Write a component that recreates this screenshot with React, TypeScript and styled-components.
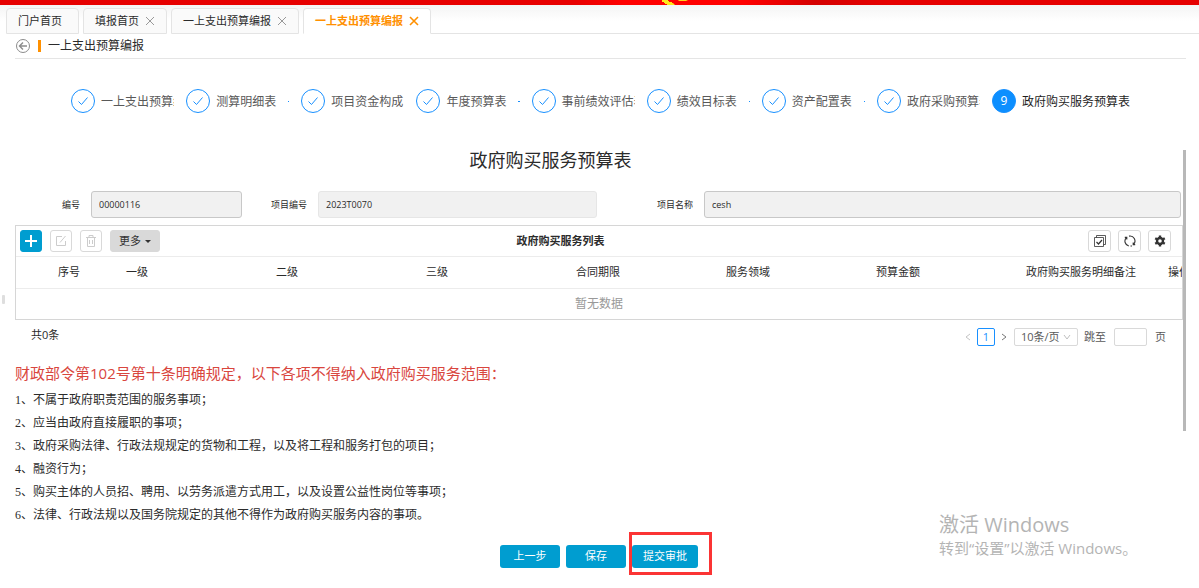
import React from "react";
import styled, { createGlobalStyle, css } from "styled-components";

const GlobalStyle = createGlobalStyle`
  * { box-sizing: border-box; }
  body {
    margin: 0;
    background: #fff;
    color: #2b2b2b;
    font-family: "Open Sans", "Noto Sans CJK SC", sans-serif;
    font-size: 11px;
    line-height: 16px;
  }
  button, input, select { font: inherit; color: inherit; margin: 0; }
`;

const Page = styled.div`
  position: relative;
  overflow: hidden;
  min-height: 100vh;
`;

const Banner = styled.header`
  height: 5px;
  background: linear-gradient(90deg, #e60000 0%, #e80000 48%, #ff0000 52%, #f00 62%, #d40000 68%, #e60000 74%);
  display: flex;
  justify-content: center;
  padding-left: 152px;
`;

const TabStrip = styled.nav`
  display: flex;
  gap: 4px;
  padding: 3px 0 0 6px;
  height: 29px;
  background: linear-gradient(#f4f4f4, #fff 16px);
`;

const Tab = styled.div<{ $active?: boolean }>`
  display: flex;
  align-items: center;
  gap: 6px;
  min-width: 73px;
  padding: 0 11px;
  border: 1px solid #e4e4e4;
  border-radius: 4px 4px 0 0;
  background: #fafafa;
  white-space: nowrap;
  ${(p) =>
    p.$active &&
    css`
      background: #fff;
      border-bottom-color: #fff;
      color: #ff9000;
      font-weight: 700;
    `}
`;

const TabFill = styled.div`
  flex: 1;
  margin-left: -4px;
  border-bottom: 1px solid #e4e4e4;
`;

const TabLink = styled.a`
  color: inherit;
  text-decoration: none;
`;

const PlainButton = styled.button`
  display: flex;
  align-items: center;
  justify-content: center;
  padding: 0;
  border: 0;
  background: none;
  color: #8c8c8c;
`;

const TabClose = styled(PlainButton)<{ $active?: boolean }>`
  color: ${(p) => (p.$active ? "#ff9000" : "#999")};
`;

const Main = styled.main`
  padding: 0 13px 0 15px;
`;

const Crumb = styled.div`
  display: flex;
  align-items: center;
  height: 25px;
  border-bottom: 1px solid #e5e5e5;
  font-size: 12px;
`;

const CrumbMark = styled.span`
  width: 3px;
  height: 12px;
  margin: 0 7px;
  background: #ff9000;
`;

const Steps = styled.ol`
  display: flex;
  gap: 12px;
  list-style: none;
  margin: 30px 56px 33px;
  padding: 0;
`;

const StepItem = styled.li<{ $current?: boolean }>`
  display: flex;
  align-items: center;
  gap: 6px;
  flex: ${(p) => (p.$current ? "none" : "1 1 0")};
  min-width: 0;
  overflow: hidden;
  white-space: nowrap;
  font-size: 12px;
  color: ${(p) => (p.$current ? "#1f1f1f" : "#595959")};
`;

const StepDot = styled.span<{ $current?: boolean }>`
  display: flex;
  align-items: center;
  justify-content: center;
  flex: none;
  width: 24px;
  height: 24px;
  border: 1px solid #1890ff;
  border-radius: 50%;
  background: ${(p) => (p.$current ? "#0d8fff" : "#fff")};
  color: ${(p) => (p.$current ? "#fff" : "#1890ff")};
`;

const StepTitle = styled.span`
  padding-top: 2px;
  line-height: 22px;
`;

const StepTail = styled.span`
  flex: none;
  width: 100px;
  height: 1px;
  margin-left: 6px;
  background: #1890ff;
`;

const ScrollArea = styled.section`
  padding-right: 3px;
  background: linear-gradient(#b8b8b8, #b8b8b8) right 4px / 3px 281px no-repeat;
  background-position: right 4px;
`;

const FormTitle = styled.h1`
  margin: 0;
  padding: 0 97px 2px 0;
  text-align: center;
  font-size: 18px;
  font-weight: 400;
  line-height: 28px;
`;

const FormGrid = styled.form`
  display: grid;
  grid-template-columns: 76fr 151fr 76fr 279fr 107fr 477fr;
  align-items: center;
  padding: 15px 2px 7px 0;
  font-size: 9px;
`;

const FieldLabel = styled.label`
  padding-right: 11px;
  text-align: right;
  white-space: nowrap;
`;

const Field = styled.input<{ $light?: boolean }>`
  width: 100%;
  min-width: 0;
  height: 27px;
  padding: 0 7px;
  border: 1px solid ${(p) => (p.$light ? "#e6e6e6" : "#c8c8c8")};
  border-radius: 3px;
  background: #f1f1f1;
`;

const Panel = styled.div`
  border: 1px solid #d6d6d6;
  overflow: hidden;
`;

const Toolbar = styled.div`
  display: grid;
  grid-template-columns: 1fr auto 1fr;
  align-items: center;
  height: 30px;
  padding: 0 11px 0 4px;
`;

const ToolGroup = styled.div<{ $end?: boolean }>`
  display: flex;
  gap: ${(p) => (p.$end ? "7px" : "8px")};
  justify-content: ${(p) => (p.$end ? "flex-end" : "flex-start")};
`;

const ToolButton = styled.button<{ $kind?: "primary" | "more" | "muted" }>`
  display: flex;
  align-items: center;
  justify-content: center;
  gap: 4px;
  width: ${(p) => (p.$kind === "more" ? "50px" : p.$kind ? "22px" : "23px")};
  height: 22px;
  padding: 0;
  border: 1px solid #d9d9d9;
  border-radius: 3px;
  background: #fff;
  color: #333;
  ${(p) => p.$kind === "primary" && "background: #009dd0; border-color: #009dd0; color: #fff;"}
  ${(p) => p.$kind === "more" && "background: #d9d9d9;"}
  ${(p) => p.$kind === "muted" && "color: #ccc;"}
`;

const PanelTitle = styled.h2`
  margin: 0;
  padding-right: 70px;
  font-size: 11px;
  font-weight: 700;
`;

const Table = styled.table`
  table-layout: fixed;
  width: 1220px;
  border-collapse: collapse;
`;

const HeadCell = styled.th<{ $flush?: boolean }>`
  height: 32px;
  padding: ${(p) => (p.$flush ? "0 0 2px" : "0 8px 2px")};
  border-top: 1px solid #ececec;
  border-bottom: 1px solid #ececec;
  text-align: left;
  font-weight: 400;
  white-space: nowrap;
`;

const Empty = styled.p`
  margin: 0;
  text-align: center;
  font-size: 12px;
  line-height: 30px;
  color: #999;
`;

const Footer = styled.div`
  display: flex;
  align-items: center;
  justify-content: space-between;
  height: 34px;
  padding: 0 17px 0 16px;
`;

const Total = styled.span`
  padding-bottom: 4px;
`;

const Pager = styled.div`
  display: flex;
  align-items: center;
  color: #595959;
`;

const PageNumber = styled.button`
  width: 18px;
  height: 18px;
  margin: 0 5px;
  padding: 0;
  border: 1px solid #1890ff;
  border-radius: 2px;
  background: #fff;
  color: #1890ff;
  line-height: 14px;
`;

const SizeBox = styled.span`
  display: flex;
  align-items: center;
  width: 64px;
  height: 18px;
  margin: 0 6px;
  padding-right: 6px;
  border: 1px solid #d9d9d9;
  border-radius: 2px;
  color: #bfbfbf;
`;

const SizeSelect = styled.select`
  appearance: none;
  flex: 1;
  min-width: 0;
  height: 16px;
  padding: 0 0 0 6px;
  border: 0;
  background: none;
  color: #595959;
  line-height: 16px;
`;

const JumpLabel = styled.label`
  display: flex;
  align-items: center;
  gap: 8px;
`;

const JumpInput = styled.input`
  width: 33px;
  height: 18px;
  border: 1px solid #d9d9d9;
  border-radius: 2px;
`;

const NoticeTitle = styled.h3`
  margin: 0;
  padding: 7px 0 4px;
  font-size: 15px;
  font-weight: 400;
  line-height: 24px;
  color: #d9463e;
`;

const NoticeLine = styled.p`
  margin: 0;
  font-family: "Liberation Serif", "Noto Sans CJK SC", serif;
  font-size: 12px;
  line-height: 23px;
`;

const Actions = styled.div`
  display: flex;
  justify-content: center;
  gap: 6px;
  padding: 18px 3px 20px 0;
`;

const ActionButton = styled.button`
  min-width: 60px;
  height: 23px;
  padding: 0 11px 2px;
  border: 0;
  border-radius: 3px;
  background: #009dd0;
  color: #fff;
`;

const Marked = styled.span`
  position: relative;
  &::after {
    content: "";
    position: absolute;
    inset: -13px -14px -7px -3px;
    border: 3px solid #fb3434;
    pointer-events: none;
  }
`;

const Watermark = styled.aside`
  position: absolute;
  right: 59px;
  bottom: 30px;
  width: 201px;
  color: #b4b4b4;
  font-size: 15px;
  line-height: 20px;
  white-space: nowrap;
`;

const WatermarkTitle = styled.div`
  font-size: 20px;
  line-height: 26px;
`;

const SideHandle = styled.div`
  position: absolute;
  left: 2px;
  top: 295px;
  width: 3px;
  height: 9px;
  border-radius: 1px;
  background: #dedede;
`;

type IconProps = { size: number; box?: number; width?: number; children: React.ReactNode };
const Icon = ({ size, box = 16, width = 1, children }: IconProps) => (
  <svg width={size} height={size} viewBox={`0 0 ${box} ${box}`} fill="none" stroke="currentColor" strokeWidth={width} aria-hidden="true">
    {children}
  </svg>
);

const tabs = [
  { title: "门户首页", closable: false },
  { title: "填报首页", closable: true },
  { title: "一上支出预算编报", closable: true },
  { title: "一上支出预算编报", closable: true, active: true },
];

const steps = ["一上支出预算编报", "测算明细表", "项目资金构成", "年度预算表", "事前绩效评估表", "绩效目标表", "资产配置表", "政府采购预算表"];

const columns = ["", "序号", "一级", "二级", "三级", "合同期限", "服务领域", "预算金额", "政府购买服务明细备注", "操作"];
const columnWidths = [34, 68, 150, 150, 150, 150, 150, 150, 150, 68];

const notices = [
  "1、不属于政府职责范围的服务事项；",
  "2、应当由政府直接履职的事项；",
  "3、政府采购法律、行政法规规定的货物和工程，以及将工程和服务打包的项目；",
  "4、融资行为；",
  "5、购买主体的人员招、聘用、以劳务派遣方式用工，以及设置公益性岗位等事项；",
  "6、法律、行政法规以及国务院规定的其他不得作为政府购买服务内容的事项。",
];

export default function App() {
  return (
    <Page>
      <GlobalStyle />
      <Banner>
        <svg width="30" height="5" viewBox="0 0 30 5" aria-hidden="true">
          <path d="M1 0h6v1h1v1h3v1h1l2 2H6V4H4V3H3V2H1z" fill="#ffe81a" />
          <path d="M17 0h10l-2 1h-7z" fill="#ffd21a" />
        </svg>
      </Banner>
      <TabStrip>
        {tabs.map((t, i) => (
          <Tab key={i} $active={t.active}>
            <TabLink href="#">{t.title}</TabLink>
            {t.closable && (
              <TabClose $active={t.active} aria-label="关闭">
                <Icon size={10} box={10} width={t.active ? 1.6 : 1}>
                  <path d="M1 1l8 8M9 1L1 9" />
                </Icon>
              </TabClose>
            )}
          </Tab>
        ))}
        <TabFill />
      </TabStrip>

      <Main>
        <Crumb>
          <PlainButton aria-label="返回">
            <Icon size={16}>
              <circle cx="8" cy="8" r="6.5" />
              <path d="M12 8H4.5M8 4.5L4.5 8L8 11.5" strokeWidth="1.4" />
            </Icon>
          </PlainButton>
          <CrumbMark />
          一上支出预算编报
        </Crumb>

        <Steps>
          {steps.map((s) => (
            <StepItem key={s}>
              <StepDot>
                <Icon size={12} box={12}>
                  <path d="M1.5 6.5L4.5 9.5L10.5 2.5" />
                </Icon>
              </StepDot>
              <StepTitle>{s}</StepTitle>
              <StepTail />
            </StepItem>
          ))}
          <StepItem $current>
            <StepDot $current>9</StepDot>
            <StepTitle>政府购买服务预算表</StepTitle>
          </StepItem>
        </Steps>

        <ScrollArea>
          <FormTitle>政府购买服务预算表</FormTitle>
          <FormGrid>
            <FieldLabel htmlFor="code">编号</FieldLabel>
            <Field id="code" defaultValue="00000116" readOnly />
            <FieldLabel htmlFor="projectCode">项目编号</FieldLabel>
            <Field id="projectCode" defaultValue="2023T0070" readOnly $light />
            <FieldLabel htmlFor="projectName">项目名称</FieldLabel>
            <Field id="projectName" defaultValue="cesh" readOnly />
          </FormGrid>

          <Panel>
            <Toolbar>
              <ToolGroup>
                <ToolButton $kind="primary" aria-label="新增">
                  <Icon size={12} box={12} width={2}>
                    <path d="M6 0v12M0 6h12" />
                  </Icon>
                </ToolButton>
                <ToolButton $kind="muted" aria-label="编辑">
                  <Icon size={12} box={12}>
                    <path d="M7 1.5H1.5v9h9V6M5 7.5L10.5 1" />
                  </Icon>
                </ToolButton>
                <ToolButton $kind="muted" aria-label="删除">
                  <Icon size={12} box={12}>
                    <path d="M1 2.5h10M4 2.5v-2h4v2M2.5 2.5v9h7v-9M4.5 5v4M7.5 5v4" />
                  </Icon>
                </ToolButton>
                <ToolButton $kind="more">
                  更多
                  <svg width="6" height="3" viewBox="0 0 6 3" aria-hidden="true">
                    <path d="M0 0h6L3 3z" fill="#333" />
                  </svg>
                </ToolButton>
              </ToolGroup>
              <PanelTitle>政府购买服务列表</PanelTitle>
              <ToolGroup $end>
                <ToolButton aria-label="选择">
                  <Icon size={12} box={12} width={0.8}>
                    <path d="M.5 2.5h9v9h-9zM2.5 2.5v-2h9v9h-2" />
                    <path d="M2.5 7l2 2l3.5-4" strokeWidth="1.2" />
                  </Icon>
                </ToolButton>
                <ToolButton aria-label="刷新">
                  <Icon size={12} box={12} width={1.1}>
                    <path d="M4.8 11A5 5 0 0 1 2.4 2.6M.8 2.4h2v2M5 1.1A5 5 0 0 1 9.6 9.4M11.2 9.6h-2v-2M6.5 11h1.5" />
                  </Icon>
                </ToolButton>
                <ToolButton aria-label="设置">
                  <Icon size={12} box={12} width={2.4}>
                    <circle cx="6" cy="6" r="3" />
                    <path d="M6 .5v2M6 9.5v2M1.2 3.2l1.8 1M9 7.8l1.8 1M1.2 8.8l1.8-1M9 4.2l1.8-1" />
                  </Icon>
                </ToolButton>
              </ToolGroup>
            </Toolbar>
            <Table>
              <colgroup>
                {columnWidths.map((w, i) => (
                  <col key={i} width={w} />
                ))}
              </colgroup>
              <thead>
                <tr>
                  {columns.map((c, i) => (
                    <HeadCell key={i} $flush={i === columns.length - 1}>
                      {c}
                    </HeadCell>
                  ))}
                </tr>
              </thead>
            </Table>
            <Empty>暂无数据</Empty>
          </Panel>

          <Footer>
            <Total>共0条</Total>
            <Pager>
              <PlainButton aria-label="上一页">
                <Icon size={8} box={8}>
                  <path d="M6 1L2 4L6 7" stroke="#c4c4c4" />
                </Icon>
              </PlainButton>
              <PageNumber>1</PageNumber>
              <PlainButton aria-label="下一页">
                <Icon size={8} box={8}>
                  <path d="M2 1L6 4L2 7" stroke="#777" />
                </Icon>
              </PlainButton>
              <SizeBox>
                <SizeSelect aria-label="每页条数" defaultValue="10">
                  <option value="10">10条/页</option>
                  <option value="20">20条/页</option>
                </SizeSelect>
                <Icon size={8} box={8}>
                  <path d="M1 2L4 6L7 2" />
                </Icon>
              </SizeBox>
              <JumpLabel>
                跳至
                <JumpInput />
                页
              </JumpLabel>
            </Pager>
          </Footer>

          <NoticeTitle>财政部令第102号第十条明确规定，以下各项不得纳入政府购买服务范围：</NoticeTitle>
          {notices.map((n) => (
            <NoticeLine key={n}>{n}</NoticeLine>
          ))}
        </ScrollArea>

        <Actions>
          <ActionButton>上一步</ActionButton>
          <ActionButton>保存</ActionButton>
          <Marked>
            <ActionButton>提交审批</ActionButton>
          </Marked>
        </Actions>
      </Main>

      <SideHandle />
      <Watermark>
        <WatermarkTitle>激活 Windows</WatermarkTitle>
        转到“设置”以激活 Windows。
      </Watermark>
    </Page>
  );
}
